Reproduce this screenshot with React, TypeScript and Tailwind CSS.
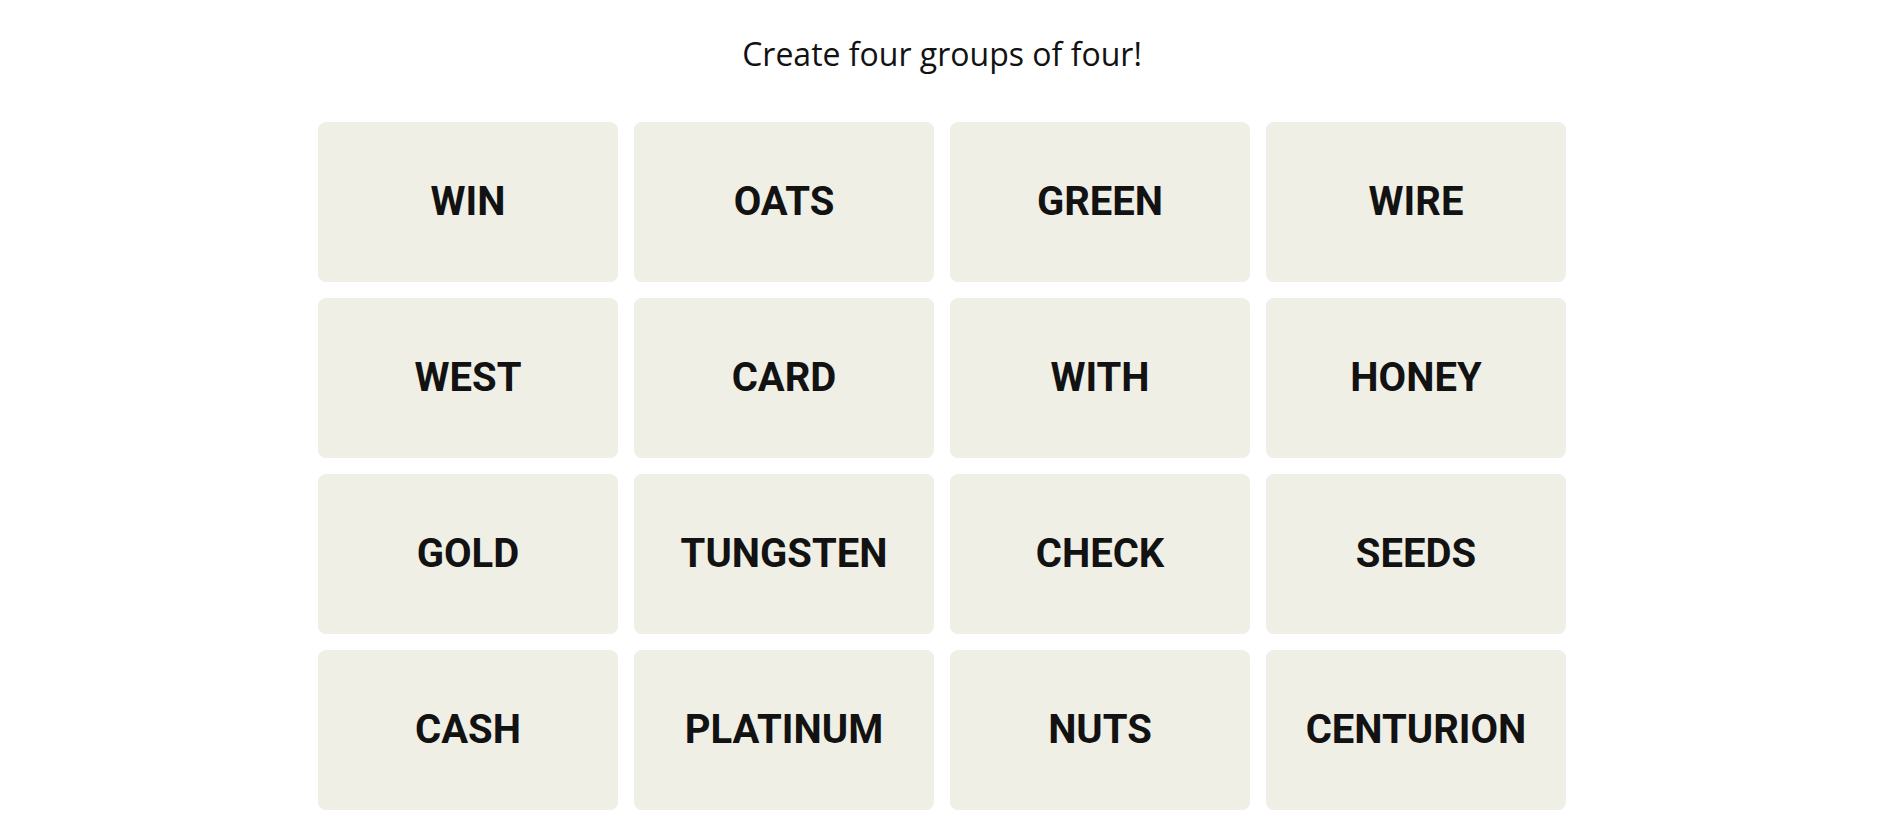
const WORDS = [
  'WIN', 'OATS', 'GREEN', 'WIRE',
  'WEST', 'CARD', 'WITH', 'HONEY',
  'GOLD', 'TUNGSTEN', 'CHECK', 'SEEDS',
  'CASH', 'PLATINUM', 'NUTS', 'CENTURION',
];

function Tile({ word }: { word: string }) {
  return (
    <button
      type="button"
      className="flex h-[160px] w-[300px] items-center justify-center rounded-lg bg-[#efefe6] text-[40px] font-bold leading-none text-[#121212] [font-family:Roboto,'Liberation_Sans',sans-serif]"
    >
      {word}
    </button>
  );
}

export default function App() {
  return (
    <div className="flex min-h-screen flex-col items-center bg-white pr-5 pt-8">
      <h1 className="text-[32px] font-normal leading-[44px] text-[#121212] [font-family:'Open_Sans',sans-serif]">
        Create four groups of four!
      </h1>
      <div className="mt-[46px] grid grid-cols-4 gap-4">
        {WORDS.map((w) => (
          <Tile key={w} word={w} />
        ))}
      </div>
    </div>
  );
}
